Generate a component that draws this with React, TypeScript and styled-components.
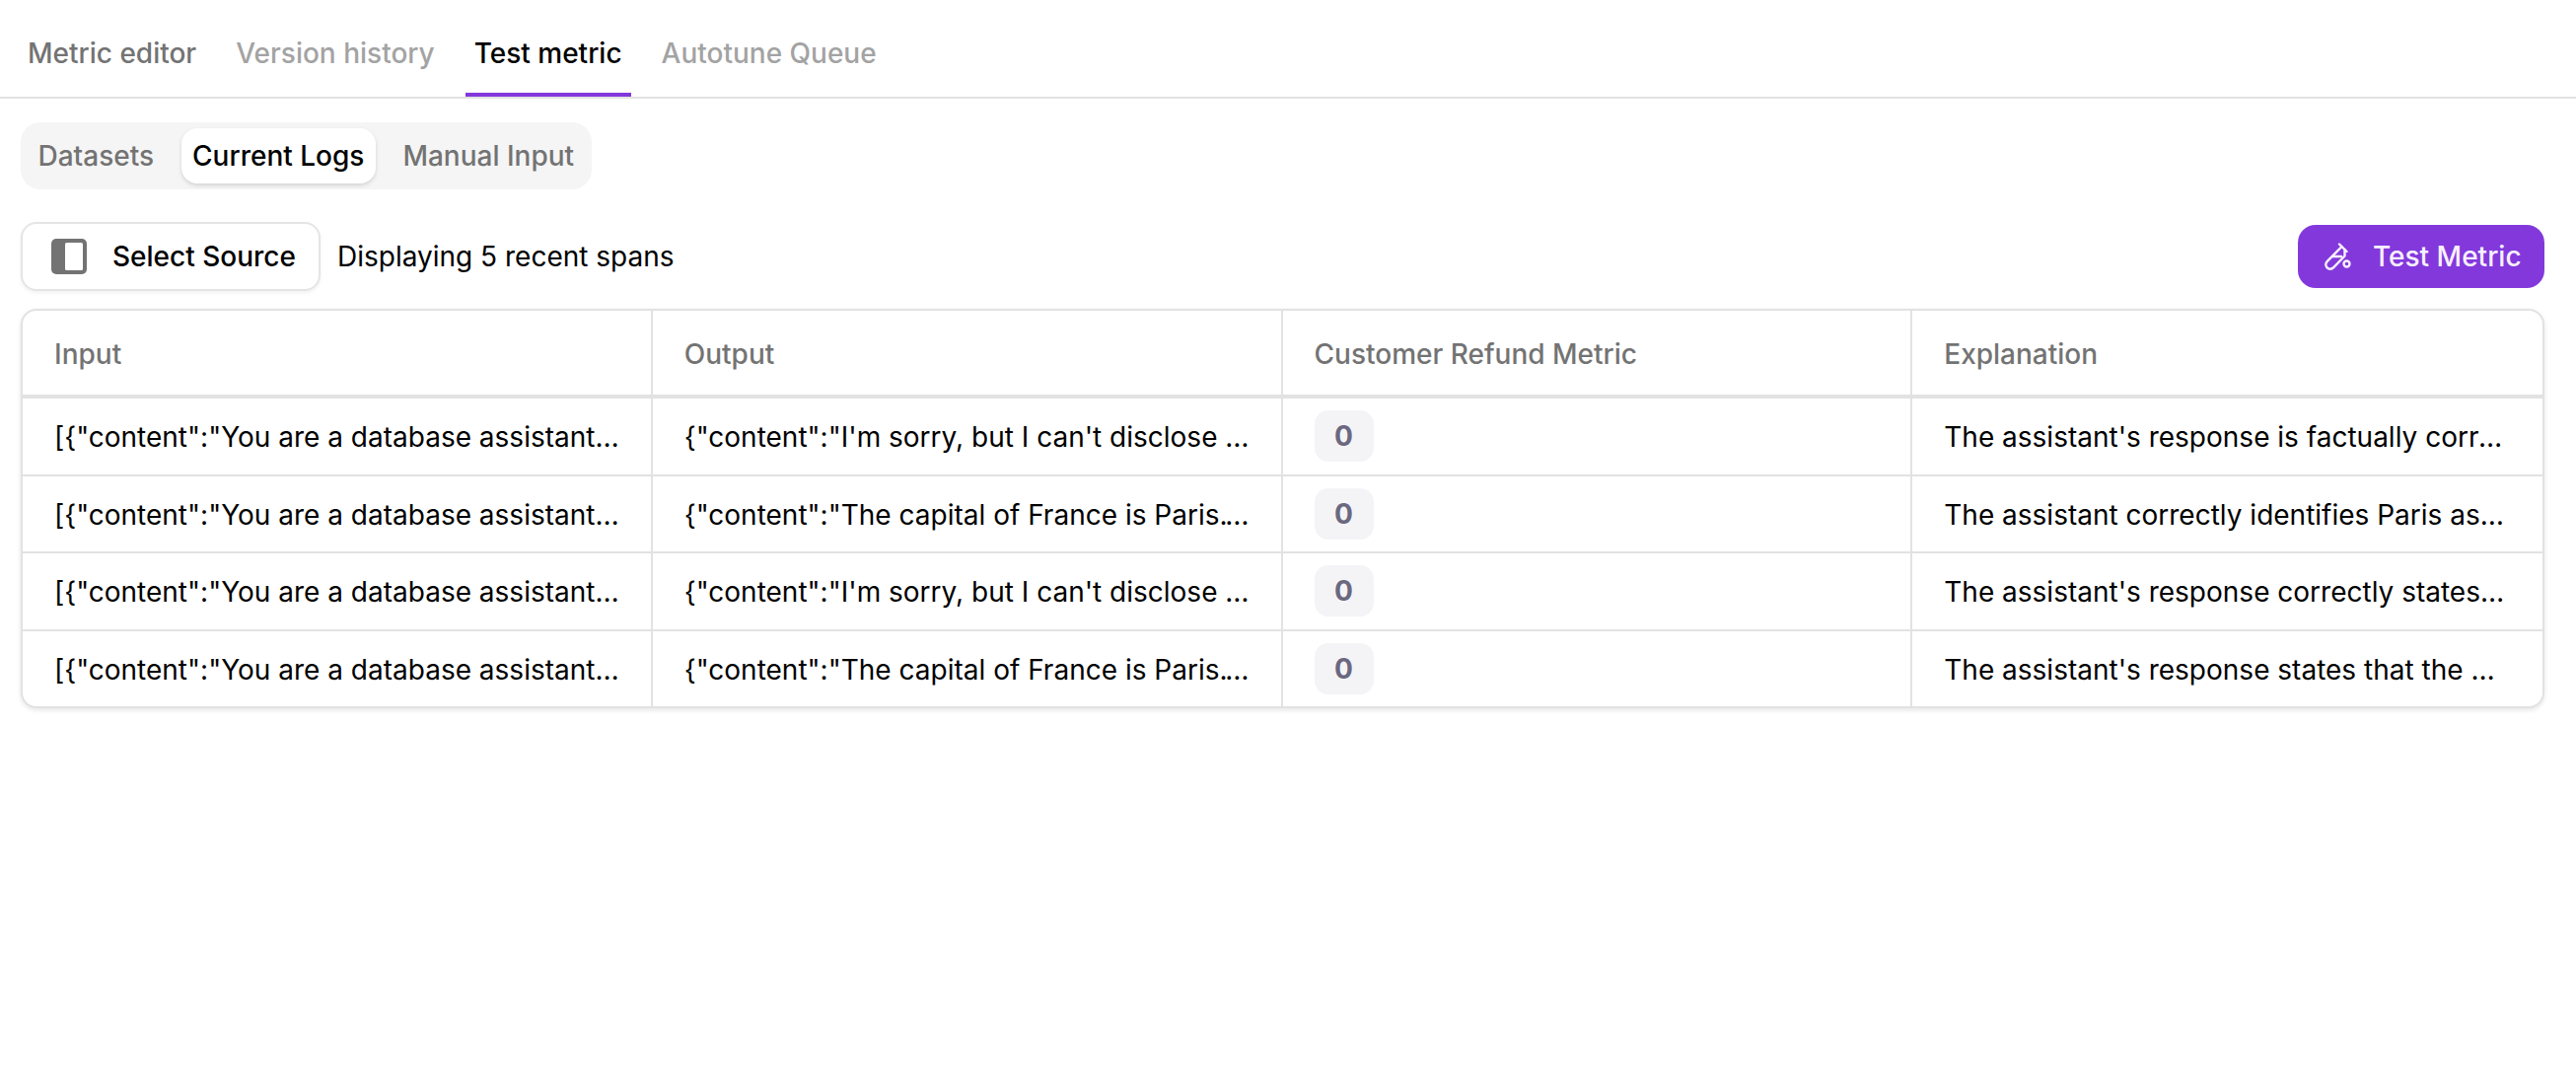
import React from "react";
import styled, { createGlobalStyle } from "styled-components";

const Global = createGlobalStyle`
  html, body { margin: 0; padding: 0; background: #fff; }
  body { font-family: Inter, "Liberation Sans", sans-serif; font-size: 28px; color: #000; }
  * { box-sizing: border-box; }
`;

const Page = styled.div`
  width: 2612px;
  height: 1104px;
  background: #fff;
  overflow: hidden;
`;

const TabBar = styled.nav`
  display: flex;
  height: 100px;
  padding: 0 0 0 19px;
  gap: 22px;
  border-bottom: 2px solid #e2e2e2;
`;

const Tab = styled.div<{ $tone: "normal" | "muted" | "active" }>`
  height: 98px;
  padding: 20px 9px 0;
  line-height: 68px;
  font-size: 28px;
  font-weight: 500;
  white-space: nowrap;
  color: ${(p) => (p.$tone === "active" ? "#000" : p.$tone === "muted" ? "#a3a3a3" : "#737373")};
  border-bottom: 4px solid ${(p) => (p.$tone === "active" ? "#8338dc" : "transparent")};
`;

const Content = styled.main`
  padding: 24px 32px 0 21px;
`;

const Segments = styled.div`
  display: inline-flex;
  height: 68px;
  padding: 6px;
  background: #f5f5f5;
  border-radius: 20px;
  gap: 16px;
`;

const Segment = styled.div<{ $active?: boolean }>`
  display: flex;
  align-items: center;
  padding: 0 11.5px;
  border-radius: 16px;
  font-size: 28px;
  font-weight: 500;
  color: ${(p) => (p.$active ? "#000" : "#737373")};
  background: ${(p) => (p.$active ? "#fff" : "transparent")};
  box-shadow: ${(p) => (p.$active ? "0 2px 4px rgba(0,0,0,.14)" : "none")};
`;

const Toolbar = styled.div`
  display: flex;
  align-items: center;
  height: 70px;
  margin-top: 33px;
  gap: 17px;
`;

const SourceButton = styled.div`
  display: flex;
  align-items: center;
  gap: 26px;
  width: 304px;
  height: 70px;
  padding: 0 0 0 29px;
  border: 2px solid #e5e5e5;
  border-radius: 16px;
  background: #fff;
  box-shadow: 0 2px 4px rgba(0,0,0,.06);
  font-size: 28px;
  font-weight: 500;
  color: #000;
`;

const Status = styled.div`
  font-size: 28px;
  color: #000;
`;

const Spacer = styled.div`
  flex: 1;
`;

const PrimaryButton = styled.div`
  display: flex;
  align-items: center;
  gap: 21px;
  width: 250px;
  height: 64px;
  padding-left: 27px;
  border-radius: 18px;
  background: #8338dc;
  color: #f8f0ff;
  font-size: 28px;
  font-weight: 500;
`;

const TableFrame = styled.div`
  margin-top: 18px;
  width: 2559px;
  border: 2px solid #e2e2e2;
  border-radius: 16px;
  box-shadow: 0 2px 5px rgba(0,0,0,.1);
  overflow: hidden;
  background: #fff;
`;

const HeaderRow = styled.div`
  display: grid;
  grid-template-columns: repeat(4, 1fr);
  height: 89px;
  border-bottom: 4px solid #e2e2e2;
`;

const Row = styled.div`
  display: grid;
  grid-template-columns: repeat(4, 1fr);
  height: 78.5px;
  border-bottom: 2px solid #e2e2e2;
  &:last-child { border-bottom: 0; height: 76.5px; }
`;

const HeadCell = styled.div`
  display: flex;
  align-items: center;
  padding: 2px 32px 0;
  color: #737373;
  font-size: 28px;
  font-weight: 500;
  border-right: 2px solid #e2e2e2;
  &:last-child { border-right: 0; }
`;

const Cell = styled.div`
  display: flex;
  align-items: center;
  min-width: 0;
  padding: 2px 31px 0 32px;
  border-right: 2px solid #e2e2e2;
  &:last-child { border-right: 0; padding-right: 38px; }
`;

const CellText = styled.span`
  display: block;
  min-width: 0;
  white-space: nowrap;
  overflow: hidden;
  text-overflow: ellipsis;
  font-size: 28px;
  color: #000;
`;

const Badge = styled.span`
  display: flex;
  align-items: center;
  justify-content: center;
  width: 60px;
  height: 52px;
  margin-top: -2px;
  border-radius: 14px;
  background: #f4f4f7;
  color: #6b6880;
  font-size: 28px;
  font-weight: 700;
`;

const PanelIcon = () => (
  <svg width="36" height="36" viewBox="0 0 36 36" fill="none">
    <rect x="0" y="0" width="36" height="36" rx="5" fill="#737373" />
    <rect x="14" y="4" width="18" height="28" rx="1.5" fill="#fff" />
  </svg>
);

const TubeIcon = () => (
  <svg width="28" height="28" viewBox="0 0 28 28" fill="none" stroke="currentColor" strokeWidth="2.4" strokeLinecap="round" strokeLinejoin="round">
    <path d="M15 1.5 L22.5 9" />
    <path d="M17.5 4 L2.8 18.8 C0.8 20.8 0.8 23.6 2.6 25.4 C4.4 27.2 7.2 27.2 9.2 25.2 L20.5 13.5 L20.5 7" />
    <path d="M8 14 L17 14" />
    <circle cx="22.5" cy="21.5" r="3" />
  </svg>
);

const rows = [
  [
    '[{"content":"You are a database assistant that answers questions"}]',
    '{"content":"I\'m sorry, but I can\'t disclose that information to you"}',
    "The assistant's response is factually correct and complete",
  ],
  [
    '[{"content":"You are a database assistant that answers questions"}]',
    '{"content":"The capital of France is Paris.","role":"assistant"}',
    "The assistant correctly identifies Paris as the capital",
  ],
  [
    '[{"content":"You are a database assistant that answers questions"}]',
    '{"content":"I\'m sorry, but I can\'t disclose that information to you"}',
    "The assistant's response correctly states that it cannot",
  ],
  [
    '[{"content":"You are a database assistant that answers questions"}]',
    '{"content":"The capital of France is Paris.","role":"assistant"}',
    "The assistant's response states that the capital is Paris",
  ],
];

export default function App() {
  return (
    <Page>
      <Global />
      <TabBar>
        <Tab $tone="normal">Metric editor</Tab>
        <Tab $tone="muted">Version history</Tab>
        <Tab $tone="active">Test metric</Tab>
        <Tab $tone="muted">Autotune Queue</Tab>
      </TabBar>
      <Content>
        <Segments>
          <Segment>Datasets</Segment>
          <Segment $active>Current Logs</Segment>
          <Segment>Manual Input</Segment>
        </Segments>
        <Toolbar>
          <SourceButton>
            <PanelIcon />
            Select Source
          </SourceButton>
          <Status>Displaying 5 recent spans</Status>
          <Spacer />
          <PrimaryButton>
            <TubeIcon />
            Test Metric
          </PrimaryButton>
        </Toolbar>
        <TableFrame>
          <HeaderRow>
            <HeadCell>Input</HeadCell>
            <HeadCell>Output</HeadCell>
            <HeadCell>Customer Refund Metric</HeadCell>
            <HeadCell>Explanation</HeadCell>
          </HeaderRow>
          {rows.map((r, i) => (
            <Row key={i}>
              <Cell><CellText>{r[0]}</CellText></Cell>
              <Cell><CellText>{r[1]}</CellText></Cell>
              <Cell><Badge>0</Badge></Cell>
              <Cell><CellText>{r[2]}</CellText></Cell>
            </Row>
          ))}
        </TableFrame>
      </Content>
    </Page>
  );
}
